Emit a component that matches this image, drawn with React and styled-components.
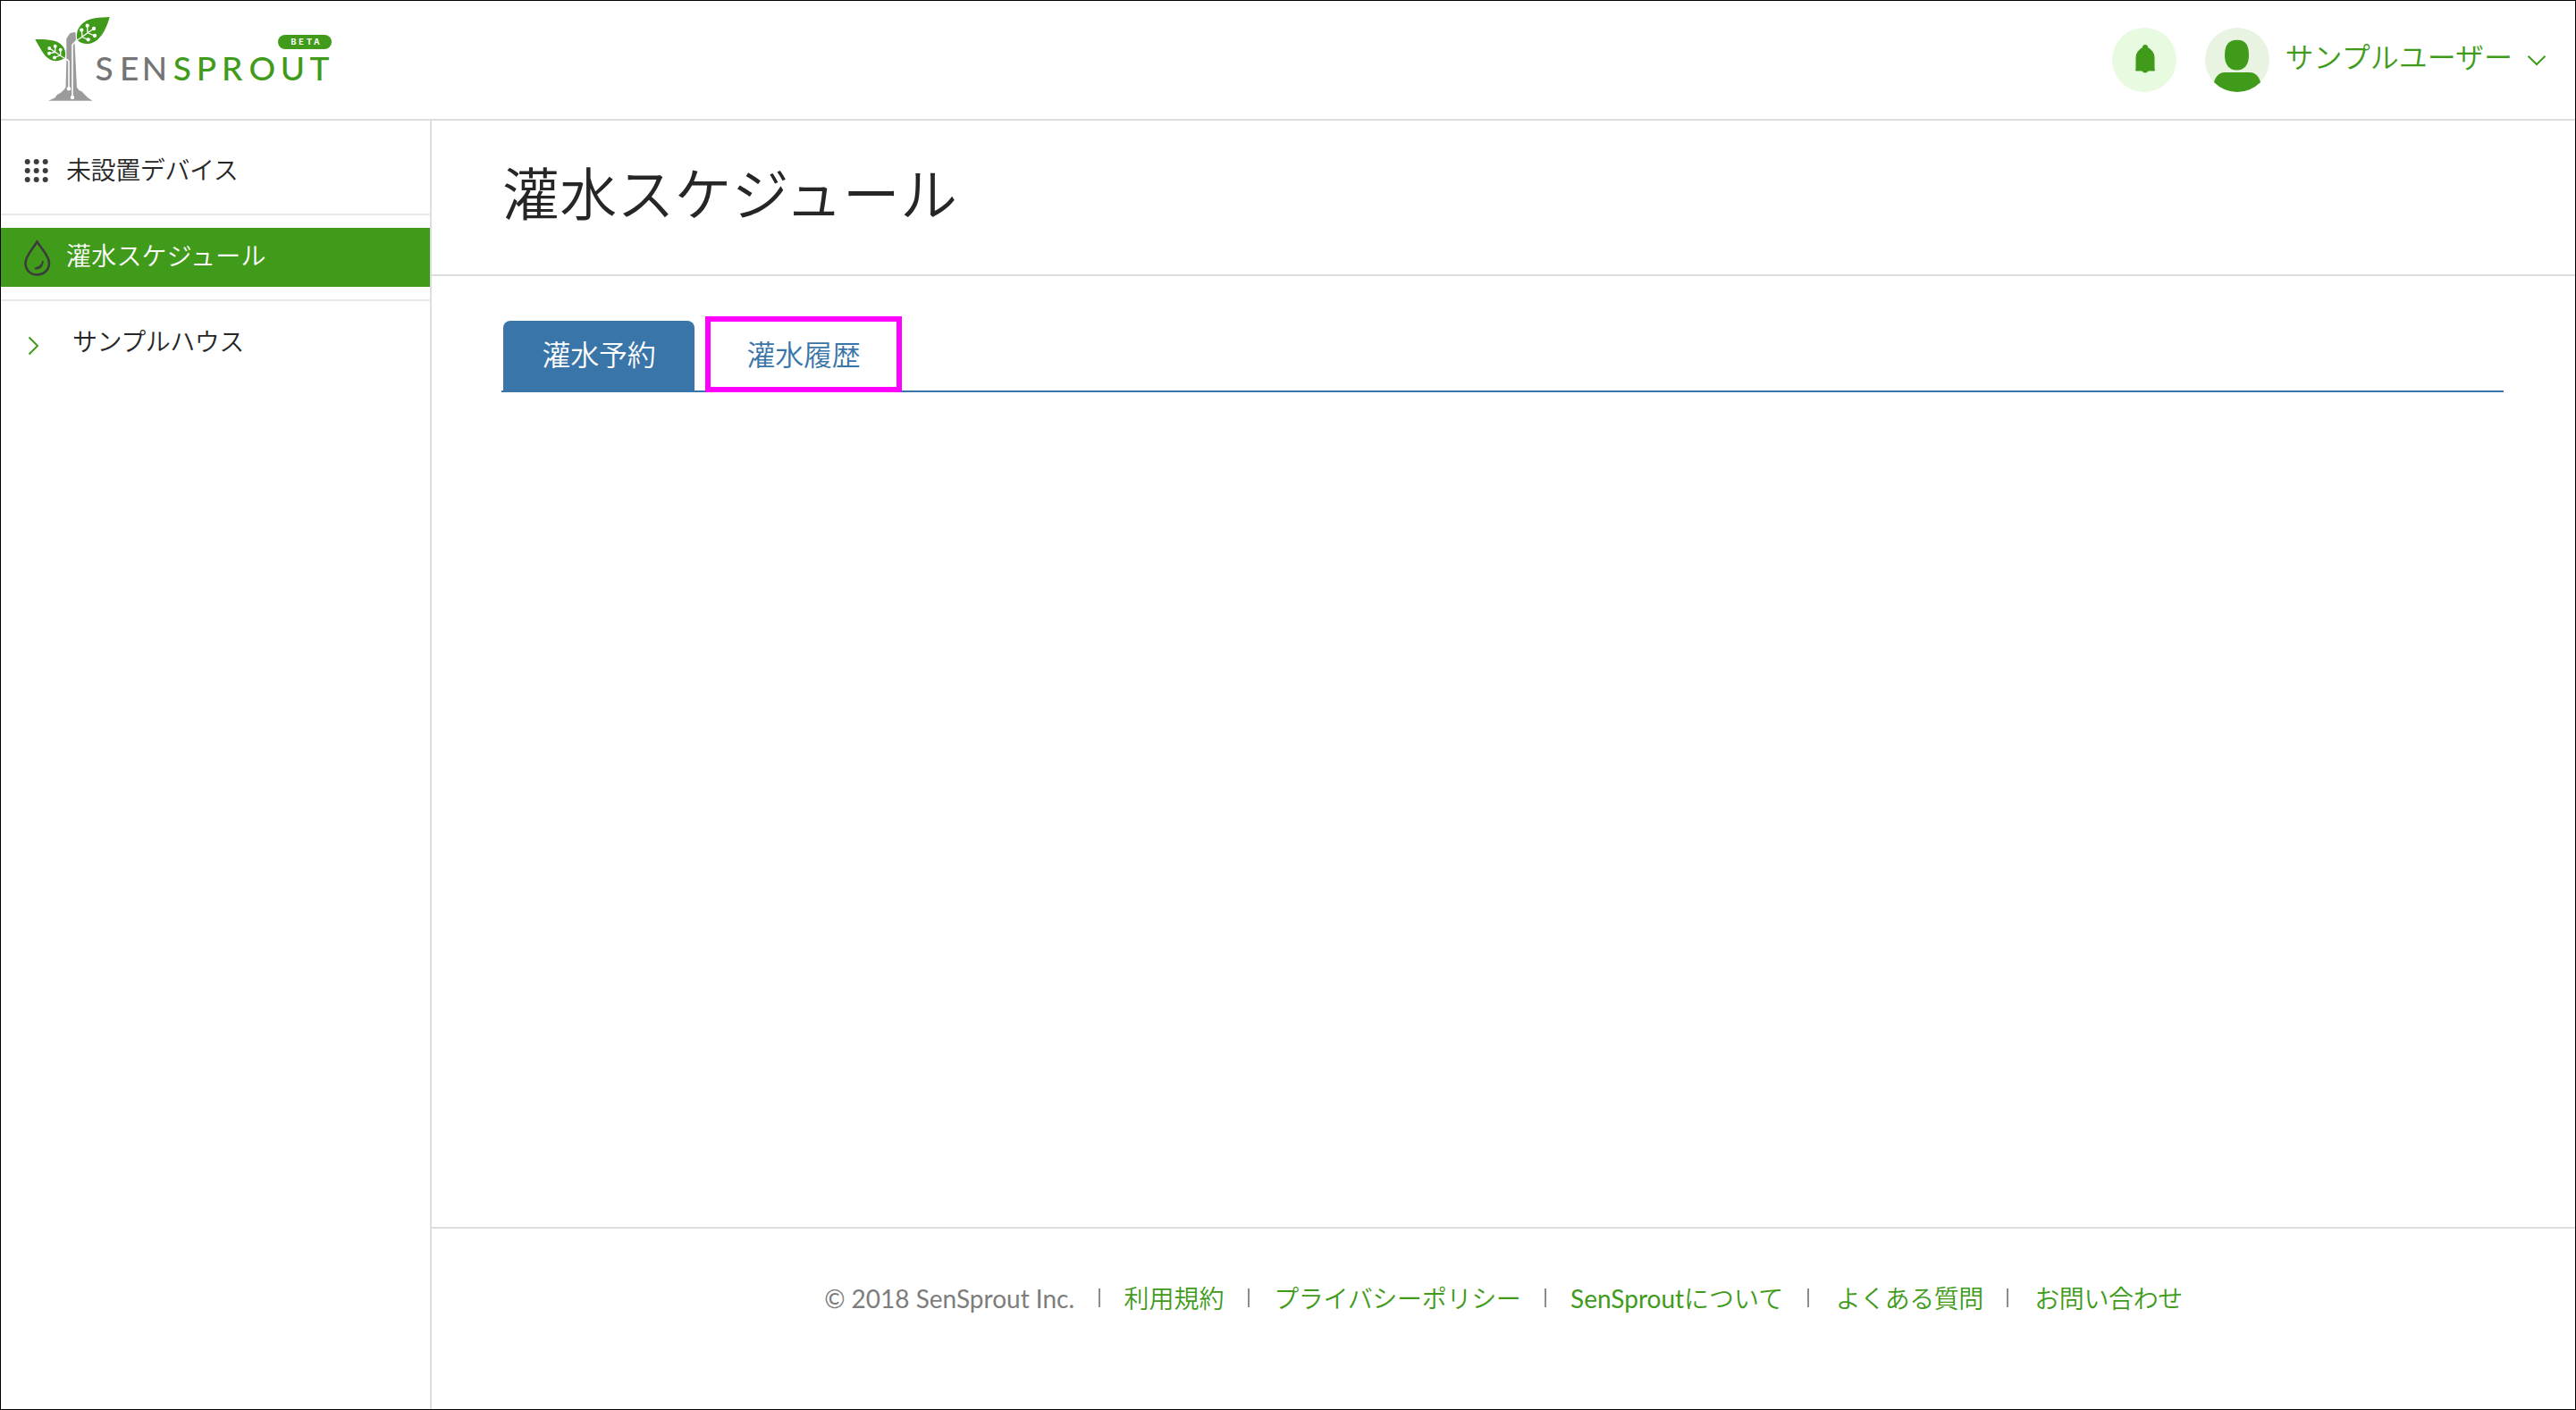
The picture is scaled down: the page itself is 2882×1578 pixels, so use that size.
import React from "react";
import styled, { createGlobalStyle, css } from "styled-components";

const GlobalStyle = createGlobalStyle`
    *, *::before, *::after {
        box-sizing: border-box;
    }
    body {
        margin: 0;
        background: #fff;
        color: #262626;
        font-family: Lato, "Noto Sans CJK JP", sans-serif;
        font-weight: 350;
    }
`
const Page = styled.div`
    display: flex;
    flex-direction: column;
    width: 2882px;
    height: 1578px;
    border: 1px solid #000;
    background: #fff;
`
const Header = styled.header`
    display: flex;
    align-items: center;
    justify-content: space-between;
    flex: none;
    height: 134px;
    padding: 0 32px 0 37px;
    border-bottom: 2px solid #ddd;
`
const LogoLink = styled.a`
    display: block;
    height: 98px;
    svg {
        display: block;
    }
`
const HeaderRight = styled.div`
    display: flex;
    align-items: center;
`
const Circle = styled.div`
    display: flex;
    width: 72px;
    height: 72px;
    border-radius: 50%;
    overflow: hidden;
    background: ${({ $bg }) => $bg};
    margin-right: ${({ $gap }) => $gap}px;
`
const UserName = styled.span`
    color: #419b1b;
    font-size: 32px;
    line-height: 40px;
    margin: 0 16px 6px 0;
`
const Body = styled.div`
    display: flex;
    flex: 1;
    min-height: 0;
`
const Sidebar = styled.nav`
    flex: none;
    width: 482px;
    border-right: 2px solid #ddd;
`
const MenuItem = styled.div`
    height: ${({ $height }) => $height || 96}px;
    padding: ${({ $top }) => $top || 14}px 0 0;
    border-bottom: ${({ $last }) => ($last ? "none" : "2px solid #e9e9e9")};
`
const MenuLink = styled.a`
    display: flex;
    align-items: center;
    height: 66px;
    padding-left: 26px;
    font-size: 28px;
    line-height: 40px;
    ${({ $active }) => $active && css`
        background: #419b1b;
        color: #fff;
    `}
`
const MenuIcon = styled.span`
    display: flex;
    flex: none;
    width: ${({ $width }) => $width}px;
    padding-top: ${({ $drop }) => $drop || 0}px;
`
const MenuText = styled.span`
    padding-bottom: 5px;
    letter-spacing: ${({ $spacing }) => $spacing}px;
`
const Main = styled.main`
    display: flex;
    flex-direction: column;
    flex: 1;
`
const TitleBar = styled.div`
    flex: none;
    height: 174px;
    padding: 36px 80px 0 79px;
    border-bottom: 2px solid #ddd;
`
const Title = styled.h1`
    margin: 0;
    font-size: 64px;
    line-height: 92px;
    font-weight: 350;
    letter-spacing: 0.2px;
`
const Content = styled.section`
    flex: 1;
    padding: 45px 80px 0 78px;
`
const Tabs = styled.div`
    display: flex;
    gap: 12px;
    height: 85px;
    padding-left: 2px;
    border-bottom: 2px solid #3975a9;
`
const Tab = styled.a`
    width: 214px;
    height: 78px;
    margin-top: 5px;
    border-radius: 8px 8px 0 0;
    text-align: center;
    font-size: 32px;
    line-height: 76px;
    letter-spacing: -0.2px;
    color: ${({ $active }) => ($active ? "#fff" : "#3975a9")};
    background: ${({ $active }) => ($active ? "#3975a9" : "transparent")};
`
const Highlight = styled.div`
    width: 220px;
    height: 85px;
    border: 6px solid #f0f;
    ${Tab} {
        display: block;
        width: auto;
        height: auto;
        margin: 0;
        line-height: 74px;
    }
`
const Footer = styled.footer`
    display: flex;
    justify-content: center;
    flex: none;
    height: 204px;
    padding: 58px 0 0;
    border-top: 2px solid #ddd;
    font-size: 28px;
    line-height: 40px;
    color: #7d7d7d;
`
const Latin = styled.span`
    font-weight: 400;
`
const FooterLink = styled.a`
    color: #419b1b;
    padding-left: ${({ $indent }) => $indent || 0}px;
    letter-spacing: ${({ $spacing }) => $spacing || 0}px;
`
const Divider = styled.span`
    width: 2px;
    height: 21px;
    margin: 9px 27px 0 26.5px;
    background: #8c8c8c;
`

const Logo = () => (
    <svg width="340" height="98" viewBox="38 18 340 98">
        <path
            fill="#9b9b9b"
            d="M74.300 43.300 L78.300 37.300 L83 36 L84.500 36.500 L85 45.500 L83.500 47 L86 98 L88.500 101 Q92 102 94 105 L98.500 109.500 L103.500 112.700 H54 L61.500 109.500 Q64 105 67 104.500 L70.500 101.500 L73.500 98 L74.300 70 Z"
        />
        <path d="M73 65.300 L77 68.300 V98 M81 108 V50 L86 45" stroke="#fff" strokeWidth="1.600" fill="none" />
        <circle cx="77" cy="99.300" r="2.200" fill="#fff" />
        <circle cx="81" cy="109" r="2.200" fill="#fff" />
        <path d="M122.700 19 C112 19.500 100 20 94 25 C86 31 85 38 86.500 45 C90 48 94 49.500 99 49 C110 48 118 36 122.700 19 Z" fill="#419b1b" />
        <path d="M39.300 44 C50 44 61 44 67.500 49 C73 53.500 74 59 72.500 65 C69 67.500 65 68.500 60 68 C51 66.500 46 56 39.300 44 Z" fill="#419b1b" />
        <g stroke="#fff" strokeWidth="1.300" fill="#fff">
            <path d="M85 46 L105 32 M92 41 L91.300 34 M98 36.500 L97.700 29 M92 41.500 L98.700 44.300 M98.500 37 L106 40" fill="none" />
            <circle cx="91.300" cy="33.700" r="1.500" />
            <circle cx="97.700" cy="28.700" r="1.500" />
            <circle cx="105" cy="32" r="1.500" />
            <circle cx="106" cy="40" r="1.500" />
            <circle cx="98.700" cy="44.300" r="1.500" />
            <path d="M74 66.500 L55.300 54 M67.700 62 V56 M61.700 58 V52 M67 62 L61 64.500 M61.500 58.500 L55 59.700" fill="none" />
            <circle cx="67.700" cy="55.700" r="1.300" />
            <circle cx="61.700" cy="51.700" r="1.300" />
            <circle cx="55.300" cy="54" r="1.300" />
            <circle cx="61" cy="64.500" r="1.300" />
            <circle cx="55" cy="59.700" r="1.300" />
        </g>
        <g fontFamily="Lato" fontWeight="500" fontSize="37">
            <text y="90" x="106.500 134 158.700" fill="#757575">SEN</text>
            <text y="90" x="193.700 219.700 248 278.500 313.700 346.500" fill="#419b1b">SPROUT</text>
        </g>
        <rect x="311" y="39" width="60" height="16" rx="8" fill="#419b1b" />
        <text y="50" x="325.500 334.300 343 351" fill="#fff" fontFamily="Inter" fontWeight="700" fontSize="9">BETA</text>
    </svg>
)
const BellIcon = () => (
    <svg width="72" height="72" viewBox="0 0 72 72" fill="#419b1b">
        <path d="M34 22 A3 3 0 0 1 40 22 Q47 26 47.500 33 V46 Q49 48 46.500 48.500 H40.500 A4 4 0 0 1 33.500 48.500 H28 Q25 48 26.500 46 V33 Q27 26 34 22 Z" />
    </svg>
)
const AvatarIcon = () => (
    <svg width="72" height="72" viewBox="0 0 72 72" fill="#419b1b">
        <path d="M36 13.700 C45.500 13.700 49 19.500 49 31 C49 41.500 44 47.500 35.500 47.500 C27 47.500 22 41.500 22 31 C22 19.500 26 13.700 36 13.700 Z" />
        <path d="M22 50 H50 C56 50 60 54 62 61 L62 72 H10 V61 C12 54 16 50 22 50 Z" />
    </svg>
)
const ChevronDown = () => (
    <svg width="22" height="14" viewBox="0 0 22 14" fill="none" stroke="#419b1b" strokeWidth="2">
        <path d="M1.500 2.800 L11 12 L20.500 2.800" />
    </svg>
)
const ChevronRight = () => (
    <svg width="20" height="22" viewBox="0 0 20 22" fill="none" stroke="#419b1b" strokeWidth="2">
        <path d="M5.500 1.500 L15 11 L5.500 20.500" />
    </svg>
)
const GridIcon = () => (
    <svg width="28" height="28" viewBox="0.300 1 28 28" fill="#3c3c3c">
        {[4, 14, 24].map((y) => [4, 14, 24].map((x) => <circle key={`${x}-${y}`} cx={x} cy={y} r="3" />))}
    </svg>
)
const DropIcon = () => (
    <svg width="30" height="42" viewBox="0 0 30 42" fill="none" stroke="#3c3c3c" strokeWidth="2.600">
        <path d="M14.500 2.500 C10 10 1.500 18 1.500 26.500 C1.500 34 7 39.500 14.500 39.500 C22 39.500 28 34 28 26.500 C28 18 19 10 14.500 2.500 Z" />
        <path d="M21 24 Q20 31 12 32.500 Q20 34 21 24 Z" strokeWidth="1.800" fill="#3c3c3c" />
    </svg>
)

const links = [
    { text: "利用規約" },
    { text: "プライバシーポリシー", spacing: -0.3 },
    { latin: "SenSprout", text: "について" },
    { text: "よくある質問", spacing: -0.5, indent: 3 },
    { text: "お問い合わせ", spacing: -0.4, indent: 2 },
];

const App = () => {
    return (
        <>
            <GlobalStyle />
            <Page>
                <Header>
                    <LogoLink>
                        <Logo />
                    </LogoLink>
                    <HeaderRight>
                        <Circle $bg="#e8fae0" $gap={32}>
                            <BellIcon />
                        </Circle>
                        <Circle $bg="#e8f3e2" $gap={18}>
                            <AvatarIcon />
                        </Circle>
                        <UserName>サンプルユーザー</UserName>
                        <ChevronDown />
                    </HeaderRight>
                </Header>
                <Body>
                    <Sidebar>
                        <MenuItem $height={106} $top={24}>
                            <MenuLink>
                                <MenuIcon $width={47}><GridIcon /></MenuIcon>
                                <MenuText $spacing={-0.4}>未設置デバイス</MenuText>
                            </MenuLink>
                        </MenuItem>
                        <MenuItem>
                            <MenuLink $active>
                                <MenuIcon $width={47} $drop={2}><DropIcon /></MenuIcon>
                                <MenuText $spacing={0.2}>灌水スケジュール</MenuText>
                            </MenuLink>
                        </MenuItem>
                        <MenuItem $last>
                            <MenuLink>
                                <MenuIcon $width={54} $drop={6}><ChevronRight /></MenuIcon>
                                <MenuText $spacing={-0.5}>サンプルハウス</MenuText>
                            </MenuLink>
                        </MenuItem>
                    </Sidebar>
                    <Main>
                        <TitleBar>
                            <Title>灌水スケジュール</Title>
                        </TitleBar>
                        <Content>
                            <Tabs>
                                <Tab $active>灌水予約</Tab>
                                <Highlight>
                                    <Tab>灌水履歴</Tab>
                                </Highlight>
                            </Tabs>
                        </Content>
                        <Footer>
                            <Latin>© 2018 SenSprout Inc.</Latin>
                            {links.map(({ latin, text, spacing, indent }) => (
                                <React.Fragment key={text}>
                                    <Divider />
                                    <FooterLink $spacing={spacing} $indent={indent}>
                                        {latin && <Latin>{latin}</Latin>}
                                        {text}
                                    </FooterLink>
                                </React.Fragment>
                            ))}
                        </Footer>
                    </Main>
                </Body>
            </Page>
        </>
    )
}

export default App
